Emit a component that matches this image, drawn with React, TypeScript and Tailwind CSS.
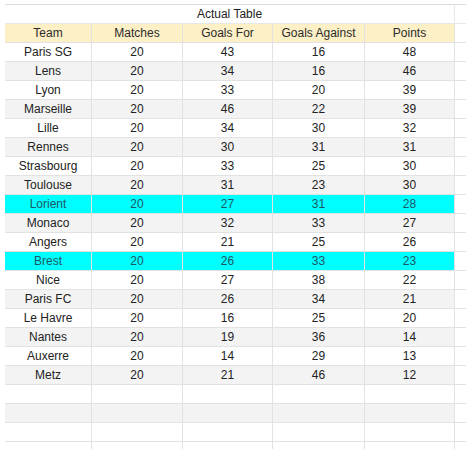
import React from "react";

const rows: [string, number, number, number, number][] = [
  ["Paris SG", 20, 43, 16, 48],
  ["Lens", 20, 34, 16, 46],
  ["Lyon", 20, 33, 20, 39],
  ["Marseille", 20, 46, 22, 39],
  ["Lille", 20, 34, 30, 32],
  ["Rennes", 20, 30, 31, 31],
  ["Strasbourg", 20, 33, 25, 30],
  ["Toulouse", 20, 31, 23, 30],
  ["Lorient", 20, 27, 31, 28],
  ["Monaco", 20, 32, 33, 27],
  ["Angers", 20, 21, 25, 26],
  ["Brest", 20, 26, 33, 23],
  ["Nice", 20, 27, 38, 22],
  ["Paris FC", 20, 26, 34, 21],
  ["Le Havre", 20, 16, 25, 20],
  ["Nantes", 20, 19, 36, 14],
  ["Auxerre", 20, 14, 29, 13],
  ["Metz", 20, 21, 46, 12],
];

const highlight = new Set(["Lorient", "Brest"]);

function Cell({ children, bg, color, noBottom }: { children?: React.ReactNode; bg: string; color?: string; noBottom?: boolean }) {
  return (
    <div
      className={`h-[19px] flex items-center justify-center border-r border-[#e2e2e2] ${noBottom ? "" : "border-b"} ${bg} ${color ?? "text-[#222222]"}`}
    >
      {children}
    </div>
  );
}

export default function App() {
  const headers = ["Team", "Matches", "Goals For", "Goals Against", "Points"];
  return (
    <div
      className="w-[466px] h-[449px] overflow-hidden bg-white pt-[4px] pl-[5px] text-[12px] leading-none"
      style={{ fontFamily: '"Liberation Sans", Arial, sans-serif' }}
    >
      <div className="grid grid-cols-[87px_91px_90px_92px_90px_1fr] border-t border-[#dcdcdc]">
        {/* title row */}
        <div className="col-span-5 h-[19px] flex items-center justify-center border-r border-b border-[#e8e8e8] bg-white text-[#222222]">
          Actual Table
        </div>
        <div className="h-[19px] border-b border-[#e8e8e8]" />
        {/* header */}
        {headers.map((h) => (
          <Cell key={h} bg="bg-[#fdefc6]" color="text-[#2b2b2b]">
            {h}
          </Cell>
        ))}
        <div className="h-[19px] border-b border-[#e2e2e2]" />
        {rows.map((r, i) => {
          const hl = highlight.has(r[0]);
          const bg = hl ? "bg-[#00ffff]" : i % 2 === 1 ? "bg-[#f3f3f3]" : "bg-white";
          const color = hl ? "text-[#1c5863]" : "text-[#222222]";
          return (
            <React.Fragment key={r[0]}>
              {r.map((v, j) => (
                <Cell key={j} bg={bg} color={color}>
                  {v}
                </Cell>
              ))}
              <div className="h-[19px] border-b border-[#e2e2e2]" />
            </React.Fragment>
          );
        })}
        {[0, 1, 2, 3].map((k) => (
          <React.Fragment key={"e" + k}>
            {[0, 1, 2, 3, 4].map((j) => (
              <Cell key={j} bg={k === 1 ? "bg-[#f3f3f3]" : "bg-white"} noBottom={k === 3} />
            ))}
            <div className={`h-[19px] border-[#e2e2e2] ${k === 3 ? "" : "border-b"}`} />
          </React.Fragment>
        ))}
      </div>
    </div>
  );
}
